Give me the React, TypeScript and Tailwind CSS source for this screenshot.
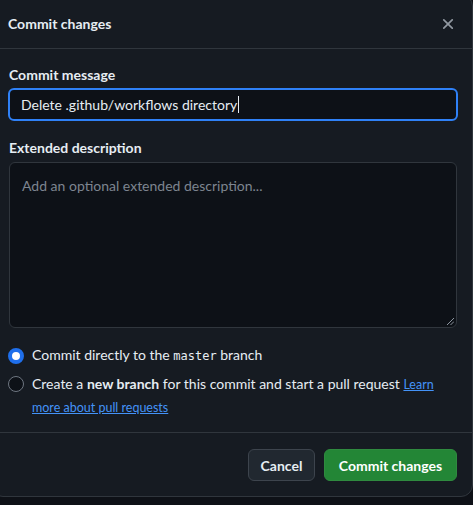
export default function App() {
  return (
    <div
      className="h-[505px] w-[473px] overflow-hidden bg-[#0e1117] text-[14px] text-[#e6edf3]"
      style={{ fontFamily: 'Lato, "Liberation Sans", sans-serif' }}
    >
      <div className="ml-[-9px] mt-[-6px] flex h-[503px] w-[482px] flex-col rounded-xl border border-[#30363d] bg-[#161b22]">
        <div className="flex h-[54px] shrink-0 items-center justify-between border-b border-[#30363d] pl-[16px] pr-[15px] pt-[5px]">
          <h1 className="text-[14px] font-bold leading-5">Commit changes</h1>
          <svg width="18" height="18" viewBox="0 0 16 16" fill="#9198a1">
            <path d="M3.72 3.72a.75.75 0 0 1 1.06 0L8 6.94l3.22-3.22a.749.749 0 0 1 1.275.326.749.749 0 0 1-.215.734L9.06 8l3.22 3.22a.749.749 0 0 1-.326 1.275.749.749 0 0 1-.734-.215L8 9.06l-3.22 3.22a.751.751 0 0 1-1.042-.018.751.751 0 0 1-.018-1.042L6.94 8 3.72 4.78a.75.75 0 0 1 0-1.06Z" />
          </svg>
        </div>

        <div className="flex flex-col pb-[13px] pl-[17px] pr-[15px] pt-[16px]">
          <label className="font-bold leading-5">Commit message</label>
          <div className="mx-[-1px] mt-[3px] flex h-[33px] items-center rounded-md border-2 border-[#2f81f7] bg-[#0d1117] pl-[11px]">
            <span>Delete .github/workflows directory</span>
            <span className="ml-px h-[17px] w-px bg-[#e6edf3]" />
          </div>

          <label className="mt-[17px] font-bold leading-5">Extended description</label>
          <div className="relative mt-[4px] h-[166px] rounded-md border border-[#30363d] bg-[#0d1117] px-[12px] pt-[12px]">
            <span className="leading-5 text-[#7d8590]">Add an optional extended description...</span>
            <svg className="absolute bottom-[2px] right-[2px]" width="7" height="7" viewBox="0 0 7 7" stroke="#8b949e" strokeWidth="1">
              <path d="M0 7L7 0M3.5 7L7 3.5" />
            </svg>
          </div>

          <div className="mt-[17px] flex items-center gap-[8px] leading-5">
            <span className="-ml-px h-[16px] w-[16px] shrink-0 rounded-full border-4 border-[#1f6feb] bg-white" />
            <span>
              Commit directly to the <span className="text-[12px]" style={{ fontFamily: '"DejaVu Sans Mono", monospace' }}>master</span> branch
            </span>
          </div>

          <div className="mt-[7px] flex items-start gap-[8px] leading-[22px]">
            <span className="-ml-px mt-[3px] h-[16px] w-[16px] shrink-0 rounded-full border border-[#6e7681] bg-[#0d1117]" />
            <p>
              Create a <b className="font-bold">new branch</b> for this commit and start a pull request{' '}
              <a className="text-[12.5px] text-[#4493f8] underline">Learn more about pull requests</a>
            </p>
          </div>
        </div>

        <div className="flex items-center justify-end gap-[9px] border-t border-[#30363d] pb-[16px] pr-[15px] pt-[16px]">
          <button className="h-[32px] w-[67px] rounded-md border border-[#3d444d] bg-[#212830] font-bold text-[#e6edf3]">
            Cancel
          </button>
          <button className="h-[32px] w-[133px] rounded-md border border-[#2f8a3f] bg-[#238636] font-bold text-white">
            Commit changes
          </button>
        </div>
      </div>
    </div>
  );
}
